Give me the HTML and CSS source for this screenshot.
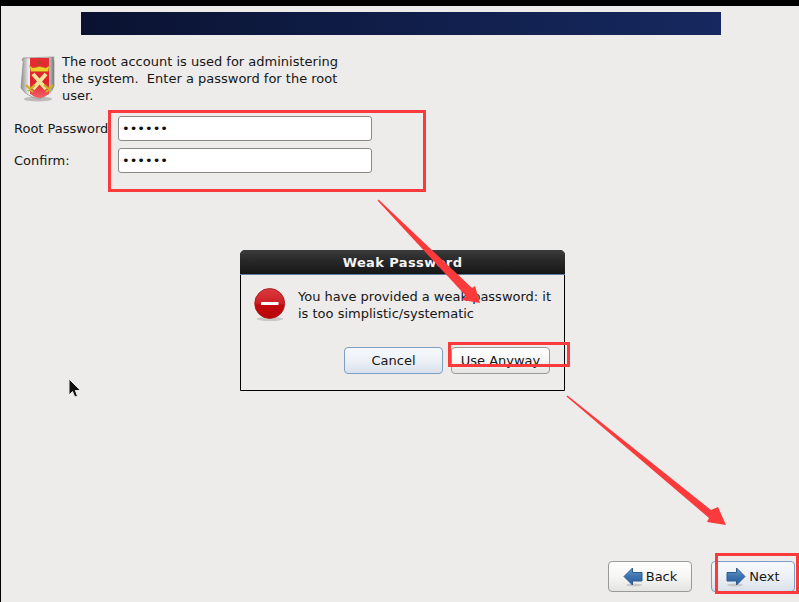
FILE: index.html
```html
<!DOCTYPE html>
<html lang="en">
<head>
<meta charset="utf-8">
<title>Root Password</title>
<link rel="stylesheet" href="styles.css">
</head>
<body>
<div class="screen">
  <main class="content">
    <div class="banner"></div>
    <section class="intro">
      <svg class="shield" viewBox="0 0 36 46" width="36" height="46" aria-hidden="true">
        <defs>
          <linearGradient id="metal" x1="0" x2="1" y1="0" y2="0">
            <stop offset="0" stop-color="#8d8d8d"/><stop offset=".25" stop-color="#f2f2f2"/><stop offset=".8" stop-color="#e0e0e0"/><stop offset="1" stop-color="#777"/>
          </linearGradient>
          <linearGradient id="red" x1="0" x2="0" y1="0" y2="1">
            <stop offset="0" stop-color="#e92b36"/><stop offset=".6" stop-color="#e2202c"/><stop offset="1" stop-color="#f2636b"/>
          </linearGradient>
        </defs>
        <ellipse cx="18" cy="43" rx="14" ry="2.500" fill="#bdbcba"/>
        <path d="M3 2 L34 1 Q33 3 34 5 L34 30 Q32 38 19 43 Q6 40 1 32 L3 8 Q4 5 2 4 Z" fill="url(#metal)" stroke="#8a8a8a" stroke-width=".7"/>
        <path d="M10 2 H29 V38 Q24 41 19.500 42.500 Q14 41 10 38 Z" fill="url(#red)"/>
        <path d="M19.500 4 V11 M17 6.500 H22" stroke="#8a5a10" stroke-width="1.300" fill="none"/>
        <path d="M9.500 9.500 L13 12 L19.500 10.500 L26 12 L29.500 9.500 L28 15.500 H11 Z" fill="#efd02c" stroke="#a98c14" stroke-width=".5"/>
        <path d="M13 33 L26 18 M26 33 L13 18" stroke="#f0e59a" stroke-width="4"/>
        <path d="M6 29 L13 36 M33 29 L26 36 M8 35 L15 29 M31 35 L24 29" stroke="#c9b21f" stroke-width="2.300"/>
      </svg>
      <p class="intro-text">The root account is used for administering the system.&nbsp; Enter a password for the root user.</p>
    </section>
    <form class="fields">
      <label class="field-label" for="pw">Root Password</label>
      <input class="field-input" id="pw" type="password" value="123456">
      <label class="field-label" for="cf">Confirm:</label>
      <input class="field-input" id="cf" type="password" value="123456">
    </form>
    <nav class="nav">
      <button class="btn nav-btn" type="button">
        <svg class="nav-icon" viewBox="0 0 20 20" width="20" height="20" aria-hidden="true">
          <defs>
            <linearGradient id="arrowfill" x1="0" x2="0" y1="0" y2="1">
              <stop offset="0" stop-color="#6a97cc"/><stop offset=".5" stop-color="#3f73ad"/><stop offset="1" stop-color="#2c5f9e"/>
            </linearGradient>
          </defs>
          <ellipse cx="11" cy="18" rx="8" ry="1.500" fill="#c9c8c6"/>
          <path d="M1 9.500 L9.500 1 V5.500 H19 V14 H9.500 V18 Z" fill="url(#arrowfill)" stroke="#2c5a92" stroke-width="1"/>
        </svg>
        Back
      </button>
      <button class="btn nav-btn focused" type="button">
        <svg class="nav-icon" viewBox="0 0 20 20" width="20" height="20" aria-hidden="true">
          <ellipse cx="9" cy="18" rx="8" ry="1.500" fill="#c9c8c6"/>
          <path d="M19 9.500 L10.500 1 V5.500 H1 V14 H10.500 V18 Z" fill="url(#arrowfill)" stroke="#2c5a92" stroke-width="1"/>
        </svg>
        Next
      </button>
    </nav>
  </main>

  <div class="dialog" role="dialog">
    <h2 class="dialog-title">Weak Password</h2>
    <div class="dialog-body">
      <svg class="stop" viewBox="0 0 32 34" width="32" height="34" aria-hidden="true">
        <defs>
          <linearGradient id="stopfill" x1="0" x2="0" y1="0" y2="1">
            <stop offset="0" stop-color="#d93a3f"/><stop offset=".5" stop-color="#cc1f24"/><stop offset=".55" stop-color="#c20a0e"/><stop offset="1" stop-color="#b80608"/>
          </linearGradient>
        </defs>
        <ellipse cx="16" cy="31" rx="13" ry="2" fill="#c9c8c6"/>
        <circle cx="15.700" cy="15.500" r="15" fill="url(#stopfill)" stroke="#a51317" stroke-width=".8"/>
        <rect x="7" y="14" width="17.500" height="3" fill="#fff"/>
      </svg>
      <p class="dialog-text">You have provided a weak password: it is too simplistic/systematic</p>
    </div>
    <div class="dialog-actions">
      <button class="btn dlg-btn focused" type="button">Cancel</button>
      <button class="btn dlg-btn" type="button">Use Anyway</button>
    </div>
  </div>

  <svg class="cursor" viewBox="0 0 14 22" width="14" height="22" aria-hidden="true">
    <path d="M1 1 V17 L4.500 13.500 L6.800 19 L9.500 18 L7.300 12.500 H12.500 Z" fill="#111" stroke="#e8e8e8" stroke-width="1"/>
  </svg>

  <svg class="annotations" viewBox="0 0 799 602" width="799" height="602" aria-hidden="true">
    <g fill="none" stroke="#fb3a3c" stroke-width="3">
      <rect x="109.500" y="111.500" width="315" height="79"/>
      <rect x="449.500" y="343.500" width="119" height="22"/>
      <rect x="716.500" y="554.500" width="81" height="38"/>
    </g>
    <g fill="#fb3a3c">
      <polygon points="378.500,199.500 472,288 475,286 480,303 462,300 466,296 377.500,200.500"/>
      <polygon points="567.500,395.500 711,510 718,507 726,525 707,522 709,518 566.500,396.500"/>
    </g>
  </svg>
</div>
</body>
</html>
```
FILE: styles.css
```css
* { box-sizing: border-box; }
html, body { margin: 0; padding: 0; }
body { background: #000; font-family: "DejaVu Sans", sans-serif; font-size: 13px; color: #161616; overflow: hidden; }
.screen { position: relative; width: 799px; height: 602px; padding: 6px 0 0 1px; background: #000; overflow: hidden; }
.content { display: flex; flex-direction: column; height: 596px; background: #edecea; padding-top: 6px; }
.banner { width: 640px; height: 23px; margin-left: 80px; background: linear-gradient(90deg, #0a1230 0%, #0f1d47 45%, #16285f 100%); }
.intro { display: flex; align-items: flex-start; gap: 6px; margin: 18px 0 0 19px; width: 330px; }
.shield { flex: none; margin-top: 3px; }
.intro-text { margin: 0; width: 285px; line-height: 17px; }
.fields { display: grid; grid-template-columns: 104px 254px; row-gap: 7px; align-items: center; margin: 12px 0 0 13px; }
.field-label { line-height: 25px; white-space: nowrap; }
.field-input { width: 254px; height: 25px; padding: 0 3px; border: 1px solid #8a8a88; border-radius: 3px; background: #fff; font: 13px "DejaVu Sans", sans-serif; color: #111; outline: none; }
.nav { display: flex; justify-content: flex-end; gap: 19px; margin-top: auto; padding: 0 4px 10px 0; }
.btn { display: flex; align-items: center; justify-content: center; border: 1px solid #9a9a98; border-radius: 4px; background: linear-gradient(180deg, #fff 0%, #f6f6f5 50%, #e4e4e2 100%); font: 13px "DejaVu Sans", sans-serif; color: #161616; padding: 0; }
.btn.focused { border-color: #7d9fc6; background: linear-gradient(180deg, #f6f9fc 0%, #edf1f6 50%, #d9e1eb 100%); }
.nav-btn { width: 84px; height: 31px; gap: 3px; }
.dialog { position: absolute; left: 240px; top: 250px; width: 325px; height: 141px; display: flex; flex-direction: column; background: #edecea; border: 1px solid #000; border-radius: 5px 5px 0 0; }
.dialog-title { margin: -1px -1px 0; height: 25px; border-radius: 5px 5px 0 0; background: linear-gradient(180deg, #3c3c3c 0%, #2a2a2a 40%, #161616 100%); border-bottom: 1px solid #5f7d9e; color: #f4f4f4; font-size: 13px; font-weight: bold; line-height: 25px; text-align: center; letter-spacing: .38px; }
.dialog-body { display: flex; align-items: flex-start; gap: 12px; padding: 13px 10px 0 13px; }
.stop { flex: none; }
.dialog-text { margin: 0; line-height: 17px; }
.dialog-actions { display: flex; justify-content: flex-end; gap: 8px; margin-top: auto; padding: 0 14px 16px 0; }
.dlg-btn { width: 99px; height: 27px; }
.cursor { position: absolute; left: 68px; top: 378px; }
.annotations { position: absolute; left: 0; top: 0; pointer-events: none; }
```
